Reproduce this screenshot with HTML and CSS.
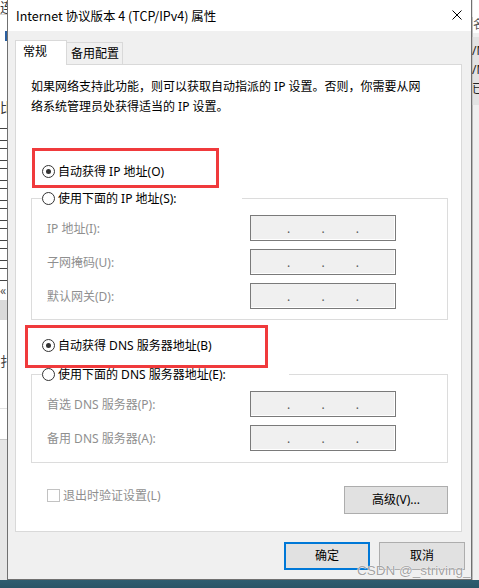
FILE: index.html
```html
<!DOCTYPE html>
<html lang="zh-CN">
<head>
<meta charset="utf-8">
<title>Internet 协议版本 4 (TCP/IPv4) 属性</title>
<link rel="stylesheet" href="styles.css">
</head>
<body>
<div class="desktop">
  <div class="bg-left">
    <div class="bl-head"><span>连</span></div>
    <div class="bl-blue"></div>
    <div class="bl-text"><span>比</span></div>
    <div class="bl-list">
      <span class="bl-cb"></span><span class="bl-cb"></span><span class="bl-cb"></span><span class="bl-cb"></span>
      <span class="bl-cb"></span><span class="bl-cb"></span><span class="bl-cb"></span><span class="bl-cb"></span>
    </div>
    <div class="bl-arrow">«</div>
    <div class="bl-band"></div>
    <div class="bl-text2"><span>扌</span></div>
    <div class="bl-rest"></div>
  </div>

  <div class="bg-right">
    <div class="br-top"></div>
    <div class="br-frag">名</div>
    <div class="br-band">
      <span>/M</span><span>/M</span><span>已</span>
    </div>
  </div>

  <div class="dialog">
    <div class="titlebar">
      <span class="title">Internet 协议版本 4 (TCP/IPv4) 属性</span>
      <svg class="close" width="10" height="10" viewBox="0 0 10 10" aria-hidden="true">
        <path d="M0.5 0.5 L9.5 9.5 M9.5 0.5 L0.5 9.5" stroke="#000" stroke-width="1" fill="none"/>
      </svg>
    </div>
    <div class="body">
      <div class="tabs">
        <div class="tab active">常规</div>
        <div class="tab">备用配置</div>
      </div>
      <div class="panel">
        <p class="intro">如果网络支持此功能，则可以获取自动指派的 IP 设置。否则，你需要从网<br>络系统管理员处获得适当的 IP 设置。</p>

        <div class="radio-row first"><span class="radio checked"></span><span>自动获得 IP 地址(O)</span></div>
        <fieldset class="group">
          <legend class="legend w-ip"><span class="radio"></span><span>使用下面的 IP 地址(S):</span></legend>
          <div class="rows">
            <div class="field-row"><span class="label">IP 地址(I):</span><span class="ipbox"><span>.</span><span>.</span><span>.</span></span></div>
            <div class="field-row"><span class="label">子网掩码(U):</span><span class="ipbox"><span>.</span><span>.</span><span>.</span></span></div>
            <div class="field-row"><span class="label">默认网关(D):</span><span class="ipbox"><span>.</span><span>.</span><span>.</span></span></div>
          </div>
        </fieldset>

        <div class="radio-row second"><span class="radio checked"></span><span>自动获得 DNS 服务器地址(B)</span></div>
        <fieldset class="group dns">
          <legend class="legend w-dns"><span class="radio"></span><span>使用下面的 DNS 服务器地址(E):</span></legend>
          <div class="rows">
            <div class="field-row"><span class="label">首选 DNS 服务器(P):</span><span class="ipbox"><span>.</span><span>.</span><span>.</span></span></div>
            <div class="field-row"><span class="label">备用 DNS 服务器(A):</span><span class="ipbox"><span>.</span><span>.</span><span>.</span></span></div>
          </div>
        </fieldset>

        <div class="bottom-row">
          <div class="check"><span class="cb"></span><span>退出时验证设置(L)</span></div>
          <button class="btn adv" type="button">高级(V)...</button>
        </div>
      </div>
      <div class="actions">
        <button class="btn ok" type="button">确定</button>
        <button class="btn" type="button">取消</button>
      </div>
    </div>
  </div>

  <div class="annot a1"></div>
  <div class="annot a2"></div>
  <div class="watermark">CSDN @_striving_</div>
</div>
</body>
</html>
```

FILE: styles.css
```css
html, body {
  margin: 0;
  padding: 0;
}

body {
  width: 479px;
  height: 588px;
  overflow: hidden;
  font-family: "Noto Sans", "Noto Sans CJK SC", sans-serif;
  font-size: 12px;
  color: #000;
}

.desktop {
  position: relative;
  width: 479px;
  height: 588px;
  overflow: hidden;
  background: linear-gradient(#f0f0f0 0, #f0f0f0 580px, #2f5d70 580px, #2a5567 588px);
}

/* ---------- background windows (partially covered by the dialog) ---------- */
.bg-left {
  position: absolute;
  left: 0;
  top: 0;
  width: 40px;
  height: 580px;
  overflow: hidden;
  background: #fff;
  display: flex;
  flex-direction: column;
}

.bl-head {
  height: 14px;
  border-bottom: 1px solid #d6d6d6;
  line-height: 14px;
  font-size: 13px;
  color: #333;
  white-space: nowrap;
}

.bl-blue {
  width: 2px;
  height: 10px;
  margin: 16px 0 0 5px;
  background: #2a5fa0;
}

.bl-text {
  margin-top: 58px;
  height: 16px;
  line-height: 16px;
  font-size: 13px;
  color: #333;
  white-space: nowrap;
}

.bl-list {
  margin-top: 13px;
  display: flex;
  flex-direction: column;
  gap: 7px;
}
.bl-cb {
  display: block;
  width: 11px;
  height: 11px;
  margin-left: -5px;
  border: 1px solid #444;
  background: #fff;
  box-sizing: content-box;
}

.bl-arrow {
  margin-top: 4px;
  height: 12px;
  line-height: 12px;
  font-size: 12px;
  color: #555;
  white-space: nowrap;
}

.bl-band {
  margin-top: 3px;
  height: 20px;
  background: #dadada;
}

.bl-text2 {
  margin-top: 34px;
  height: 14px;
  line-height: 14px;
  font-size: 13px;
  color: #444;
  white-space: nowrap;
  border-bottom: 1px solid #e2e2e2;
  padding-bottom: 40px;
}

.bl-rest {
  flex: 1;
  margin-top: 30px;
  background: #e6e6e6;
  border-top: 1px solid #c9c9c9;
}

.bg-right {
  position: absolute;
  left: 472px;
  top: 0;
  width: 7px;
  height: 580px;
  overflow: hidden;
  background: #f0f0f0;
  display: flex;
  flex-direction: column;
  box-shadow: inset 1px 0 0 #d4d4d4;
}
.br-top {
  height: 17px;
  background: #fff;
}
.br-frag {
  height: 16px;
  line-height: 16px;
  font-size: 12px;
  color: #555;
  margin-left: 1px;
  white-space: nowrap;
  background: #fff;
}
.br-band {
  margin-top: 4px;
  height: 68px;
  background: #e3e3e3;
  display: flex;
  flex-direction: column;
  padding-top: 4px;
  box-sizing: border-box;
  font-size: 12px;
  line-height: 19px;
  color: #222;
  white-space: nowrap;
}

/* ---------- dialog ---------- */
.dialog {
  position: absolute;
  left: 7px;
  top: 0;
  width: 465px;
  height: 580px;
  box-sizing: border-box;
  border: 1px solid #707070;
  border-top: none;
  background: #f0f0f0;
  display: flex;
  flex-direction: column;
  box-shadow: 1px 0 0 rgba(0, 0, 0, 0.12);
}

.titlebar {
  height: 31px;
  flex: none;
  background: #fff;
  display: flex;
  align-items: center;
  justify-content: space-between;
  padding: 0 9px 0 8px;
}
.title {
  font-family: "Noto Sans CJK SC", sans-serif;
  font-size: 12.5px;
  line-height: 16px;
  white-space: nowrap;
}
.close {
  display: block;
  margin-top: -1px;
}

.body {
  flex: 1;
  padding: 9px 6px 0 7px;
  display: flex;
  flex-direction: column;
}

.tabs {
  display: flex;
  align-items: flex-end;
  height: 25px;
  margin-bottom: -1px;
  position: relative;
  z-index: 1;
}
.tab {
  box-sizing: border-box;
  width: 57px;
  height: 22px;
  margin-left: -1px;
  margin-bottom: 1px;
  padding-left: 4px;
  border: 1px solid #d9d9d9;
  border-bottom: none;
  background: #f0f0f0;
  line-height: 21px;
  white-space: nowrap;
}
.tab.active {
  width: 52px;
  height: 25px;
  margin-left: 0;
  margin-bottom: 0;
  padding-left: 7px;
  background: #fff;
  line-height: 22px;
  position: relative;
  z-index: 2;
}

.panel {
  box-sizing: border-box;
  width: 447px;
  height: 468px;
  border: 1px solid #d9d9d9;
  background: #fff;
  padding: 12px 13px 0 15px;
}

.intro {
  margin: 0;
  line-height: 20px;
  white-space: nowrap;
}

.radio-row {
  display: flex;
  align-items: center;
  gap: 3px;
  height: 20px;
  margin-left: 11px;
  white-space: nowrap;
}
.radio-row.first { margin-top: 44px; }
.radio-row.second { margin-top: 15px; }

.radio {
  box-sizing: border-box;
  width: 13px;
  height: 13px;
  flex: none;
  border: 1px solid #333;
  border-radius: 50%;
  background: #fff;
  display: grid;
  place-items: center;
}
.radio.checked::after {
  content: "";
  width: 5px;
  height: 5px;
  border-radius: 50%;
  background: #333;
}

.group {
  margin: 7px 0 0;
  padding: 7px 0 10px 10px;
  border: 1px solid #dcdcdc;
  min-width: 0;
}
.group.dns {
  margin-top: 9px;
  padding-bottom: 11px;
}

.legend {
  padding: 0;
  height: 20px;
  display: flex;
  align-items: center;
  gap: 3px;
  white-space: nowrap;
  box-sizing: border-box;
}
.w-ip { width: 200px; }
.w-dns { width: 247px; }

.rows {
  display: grid;
  row-gap: 8px;
}

.field-row {
  display: grid;
  grid-template-columns: 203px 146px;
  align-items: center;
  height: 26px;
  padding-left: 5px;
}
.label {
  color: #8f8f8f;
  white-space: nowrap;
}

.ipbox {
  box-sizing: border-box;
  height: 26px;
  border: 1px solid #7a7a7a;
  background: #f0f0f0;
  box-shadow: inset -1px -1px 0 #fff;
  display: flex;
  justify-content: space-evenly;
  align-items: center;
  padding: 0 5px;
  color: #5a5a5a;
  line-height: 12px;
}
.ipbox span {
  transform: translateY(1px);
}

.bottom-row {
  margin-top: 23px;
  padding-left: 16px;
  display: flex;
  justify-content: space-between;
  align-items: flex-start;
}
.check {
  margin-top: 2px;
  display: flex;
  align-items: center;
  gap: 3px;
  height: 14px;
  color: #8f8f8f;
  white-space: nowrap;
}
.cb {
  box-sizing: border-box;
  width: 13px;
  height: 13px;
  border: 1px solid #c2c2c2;
  background: #fff;
}

.btn {
  box-sizing: border-box;
  height: 28px;
  margin: 0;
  padding: 0;
  font-family: inherit;
  font-size: 12px;
  color: #000;
  background: #e1e1e1;
  border: 1px solid #adadad;
  border-radius: 0;
  text-align: center;
  line-height: 24px;
}
.adv { width: 104px; }

.actions {
  margin-top: 10px;
  display: flex;
  justify-content: flex-end;
  gap: 9px;
}
.actions .btn { width: 86px; }
.actions .ok {
  border: 2px solid #0078d7;
}

/* ---------- annotation overlays ---------- */
.annot {
  position: absolute;
  box-sizing: border-box;
  border: 3px solid #f03a3c;
}
.a1 {
  left: 32px;
  top: 148px;
  width: 187px;
  height: 40px;
}
.a2 {
  left: 25px;
  top: 325px;
  width: 243px;
  height: 43px;
}

.watermark {
  position: absolute;
  left: 357px;
  top: 562px;
  font-family: "Liberation Sans", sans-serif;
  font-size: 13.5px;
  line-height: 18px;
  color: rgba(150, 150, 150, 0.9);
  text-shadow: 0 0 1px #fff, 0 0 1px #fff;
  white-space: nowrap;
}
```
